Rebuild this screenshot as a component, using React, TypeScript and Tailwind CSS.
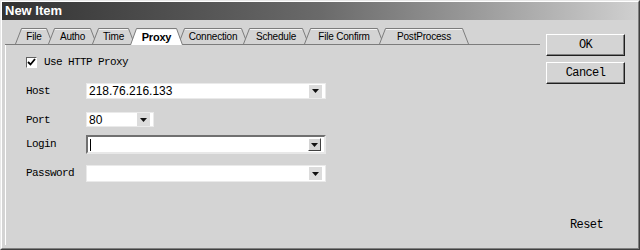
import React from "react";

const mono = { fontFamily: '"Liberation Mono", "DejaVu Sans Mono", monospace' };
const sans = { fontFamily: '"Liberation Sans", Arial, sans-serif' };

const tabs = [
  { label: "File", w: 38 },
  { label: "Autho", w: 49 },
  { label: "Time", w: 43 },
  { label: "Proxy", w: 53, active: true },
  { label: "Connection", w: 70 },
  { label: "Schedule", w: 66 },
  { label: "File Confirm", w: 80 },
  { label: "PostProcess", w: 90 },
];

const Tab: React.FC<{ label: string; w: number; active?: boolean }> = ({ label, w, active }) => {
  const h = active ? 17 : 16;
  return (
    <div
      className={`relative flex items-center justify-center -ml-[5px] first:ml-0 ${
        active ? "z-10 h-[17px] -mb-px font-bold" : "h-[16px]"
      }`}
      style={{ width: w }}
    >
      <svg className="absolute inset-0" width={w} height={h}>
        <path
          d={`M0.5 ${h} L6.5 0.5 L${w - 6.5} 0.5 L${w - 0.5} ${h}`}
          fill={active ? "#ffffff" : "#d4d4d4"}
          stroke="#7c7c7c"
          strokeWidth="1"
        />
        <path d={`M7 1.5 L${w - 7} 1.5`} stroke="#f4f4f4" strokeWidth="1" />
      </svg>
      <span
        className={`relative text-[10px] tracking-[-0.2px] text-black ${active ? "text-[11px] pt-[1px]" : ""}`}
        style={sans}
      >
        {label}
      </span>
    </div>
  );
};

const Arrow: React.FC<{ raised?: boolean }> = ({ raised }) => (
  <div
    className={`flex h-[13px] w-[13px] items-center justify-center ${
      raised
        ? "border border-t-white border-l-white border-r-[#404040] border-b-[#404040] bg-[#d4d4d4]"
        : "bg-[#dcdcdc]"
    }`}
  >
    <svg width="7" height="4" viewBox="0 0 7 4">
      <path d="M0 0 L7 0 L3.5 4 Z" fill="#111" />
    </svg>
  </div>
);

const Combo: React.FC<{
  w: number;
  h: number;
  value?: string;
  focused?: boolean;
}> = ({ w, h, value, focused }) => (
  <div
    className={`flex items-center bg-white pr-[3px] ${
      focused
        ? "border-2 border-t-[#707070] border-l-[#707070] border-r-[#e8e8e8] border-b-[#e8e8e8]"
        : "border border-[#eaeaea]"
    }`}
    style={{ width: w, height: h }}
  >
    <div className="flex-1 pl-[2px] text-[12px] leading-none text-black" style={sans}>
      {focused ? <span className="inline-block h-[12px] w-px bg-black align-middle" /> : value}
    </div>
    <Arrow raised={focused} />
  </div>
);

const Label: React.FC<{ children: React.ReactNode }> = ({ children }) => (
  <div className="w-[60px] text-[11px] tracking-[-0.6px] text-black" style={mono}>
    {children}
  </div>
);

const Button: React.FC<{ children: React.ReactNode }> = ({ children }) => (
  <button
    className="flex h-[22px] w-[79px] items-center justify-center border border-t-white border-l-white border-r-[#202020] border-b-[#202020] bg-[#d4d4d4] text-[12px] tracking-[-0.6px] text-black shadow-[inset_-1px_-1px_0_#808080]"
    style={mono}
  >
    {children}
  </button>
);

export default function App() {
  return (
    <div className="h-[250px] w-[640px] overflow-hidden border border-t-[#e8e8e8] border-l-[#e8e8e8] border-r-[#404040] border-b-[#404040] bg-[#d4d4d4]">
      <div className="flex h-full flex-col border border-t-white border-l-white border-r-[#808080] border-b-[#808080]">
        {/* title bar */}
        <div className="flex h-[18px] items-center bg-gradient-to-r from-[#333333] via-[#6a6a6a] to-[#d0d0d0] pl-[3px]">
          <span className="text-[13px] font-bold text-white" style={sans}>
            New Item
          </span>
        </div>

        <div className="flex flex-1">
          {/* left: tabs + proxy form */}
          <div className="w-[544px] pt-[8px]">
            <div className="ml-[3px] flex w-[535px] items-end border-b border-[#7c7c7c] pl-[10px]">
              {tabs.map((t) => (
                <Tab key={t.label} {...t} />
              ))}
            </div>

            <div className="ml-[3px] flex h-[200px] flex-col border-l border-white pl-[20px]">
              <div className="mt-[11px] flex h-[12px] items-center gap-[7px]">
                <div className="flex h-[11px] w-[11px] items-center justify-center border border-t-[#606060] border-l-[#606060] border-r-white border-b-white bg-white">
                  <svg width="9" height="8" viewBox="0 0 9 8">
                    <path d="M1 4 L3.5 6.5 L8 1" fill="none" stroke="#000" strokeWidth="1.8" />
                  </svg>
                </div>
                <span className="text-[11px] tracking-[-0.6px] text-black" style={mono}>
                  Use HTTP Proxy
                </span>
              </div>

              <div className="mt-[15px] flex items-center">
                <Label>Host</Label>
                <Combo w={240} h={16} value="218.76.216.133" />
              </div>

              <div className="mt-[12px] flex items-center">
                <Label>Port</Label>
                <Combo w={68} h={15} value="80" />
              </div>

              <div className="mt-[7px] flex items-center">
                <Label>Login</Label>
                <Combo w={240} h={19} focused />
              </div>

              <div className="mt-[11px] flex items-center">
                <Label>Password</Label>
                <Combo w={240} h={17} />
              </div>
            </div>
          </div>

          {/* right: buttons */}
          <div className="flex flex-1 flex-col pt-[14px]">
            <div className="flex flex-col gap-[6px]">
              <Button>OK</Button>
              <Button>Cancel</Button>
            </div>
            <div className="mt-auto mb-[14px] pl-[24px] text-[12px] tracking-[-0.6px] text-black" style={mono}>
              Reset
            </div>
          </div>
        </div>
      </div>
    </div>
  );
}
